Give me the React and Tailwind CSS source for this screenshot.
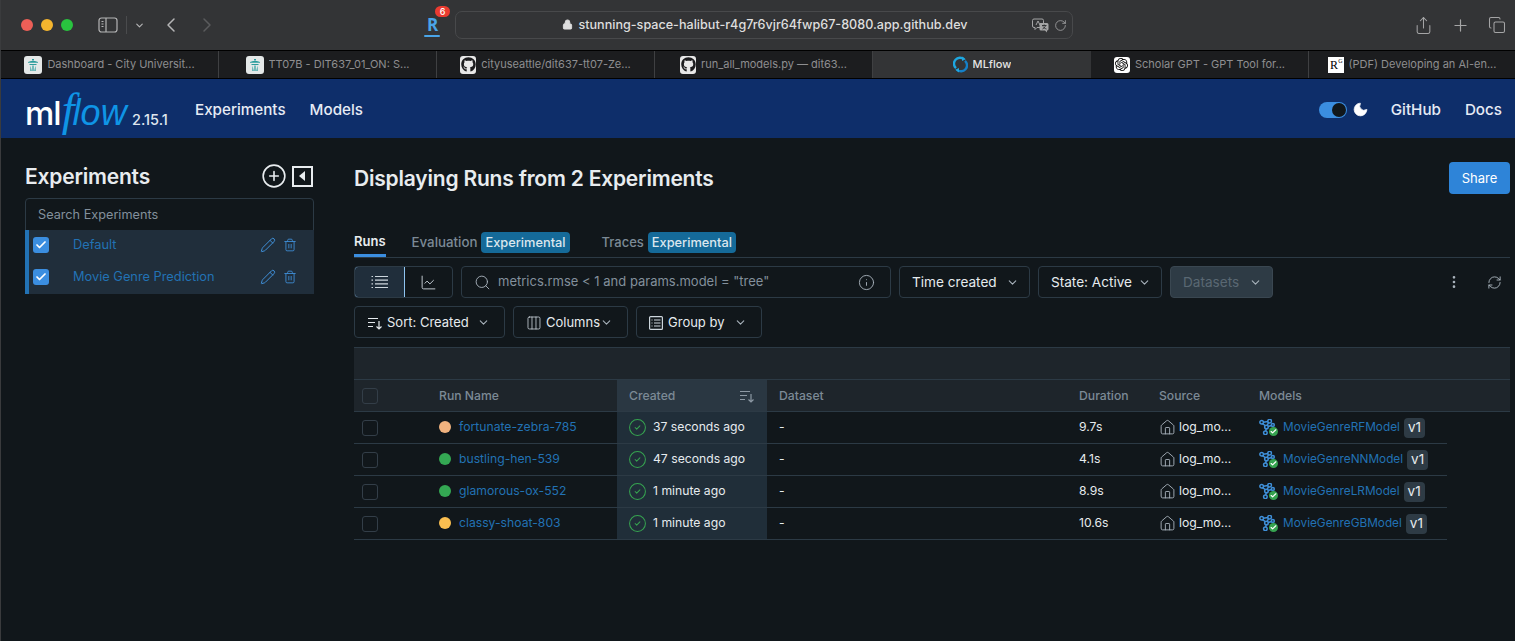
import React from "react";
import {
  ChevronDown, ChevronLeft, ChevronRight, Lock, Plus, RotateCw, Search, Info, Pencil, Trash2, Check,
  ChartLine, Columns3, EllipsisVertical, RefreshCw, House, CircleCheck, Moon, CirclePlus, Share, Copy,
} from "lucide-react";
import { FaGithub } from "react-icons/fa";
import { SiOpenai } from "react-icons/si";

const Chrome = "font-['Inter','Liberation_Sans',sans-serif]";

function SidebarIcon() {
  return (
    <svg width="20" height="16" viewBox="0 0 20 16" fill="none" stroke="#b5b5b6" strokeWidth="1.2">
      <rect x="1" y="1" width="18" height="14" rx="2.5" />
      <path d="M8 1v14" />
      <path d="M3.5 4.5h2M3.5 7h2M3.5 9.500h2" strokeWidth="1" />
    </svg>
  );
}

function TranslateIcon() {
  return (
    <svg width="17" height="15" viewBox="0 0 17 15" fill="none" stroke="#a5a5a6" strokeWidth="1">
      <path d="M2 1h8a1.500 1.500 0 0 1 1.500 1.500V8a1.500 1.500 0 0 1-1.500 1.500H5L3 11.500V9.500H2A1.500 1.500 0 0 1 .5 8V2.500A1.500 1.500 0 0 1 2 1z" />
      <path d="M8 5h7a1.500 1.500 0 0 1 1.500 1.500V11a1.500 1.500 0 0 1-1.500 1.500v2l-2-2H9A1.500 1.500 0 0 1 7.500 11V6z" fill="#a5a5a6" stroke="none" />
      <path d="M4 7l2-4 2 4" />
      <path d="M10 7.500h4.500M12.200 6.500v1M13.500 7.500c-.5 2-1.800 3-3 3.500M11 8.500c.6 1.200 2 2 3.500 2.500" stroke="#333436" />
    </svg>
  );
}

function SpaceNeedle() {
  return (
    <span className="flex h-[18px] w-[18px] shrink-0 items-center justify-center rounded-[3px] bg-[#e4e8e8]">
      <svg width="14" height="14" viewBox="0 0 14 14" fill="#2b9c9c">
        <path d="M6 1h2v1.500H6zM2 4c2-1.500 8-1.500 10 0v.8H2zM3.500 6h7v1h-7zM4.500 7.500l1.200 5.500H4.300zM9.500 7.500l-1.200 5.500h1.400zM6.400 7.500h1.200v5.500H6.400z" />
      </svg>
    </span>
  );
}

function GithubFav() {
  return (
    <span className="flex h-[18px] w-[16px] shrink-0 items-center justify-center rounded-[3px] bg-[#e8e8e8] text-[#1b1b1d]">
      <FaGithub size={15} />
    </span>
  );
}

function MlflowFav() {
  return (
    <svg width="15" height="17" viewBox="0 0 15 17" fill="none" strokeWidth="2.4">
      <path d="M11 3.200A6 6 0 0 0 3 12.200" stroke="#1ea7e0" />
      <path d="M4 13.800A6 6 0 0 0 12 4.800" stroke="#1580c8" />
      <path d="M9 0.500l3.800 2.700-3.800 1.800zM6 16.500L2.200 13.800 6 12z" fill="#1ea7e0" stroke="none" />
    </svg>
  );
}

function ListIcon() {
  return (
    <svg width="17" height="14" viewBox="0 0 17 14" fill="none" stroke="#cdd6dd" strokeWidth="1.200">
      <path d="M4 1.500h13M4 5.200h13M4 8.900h13M4 12.500h13M.5 1.500h1.500M.5 5.200h1.500M.5 8.900h1.500M.5 12.500h1.500" />
    </svg>
  );
}

function GroupIcon() {
  return (
    <svg width="14" height="14" viewBox="0 0 14 14" fill="none" stroke="#cdd6dd" strokeWidth="1.200">
      <rect x=".6" y=".6" width="12.800" height="12.800" rx="1" />
      <path d="M5 4h6.500M5 7h6.500M5 10h6.500M2.500 4h1M2.500 7h1M2.500 10h1" />
    </svg>
  );
}

function Tab({ icon, label, active, width = "w-[218px]" }) {
  return (
    <div className={`flex h-full ${width} shrink-0 items-center justify-center gap-[5px] border-r border-[#3f4042] px-[8px] text-[11px] ${active ? "bg-[#333436] font-medium text-[#e4e4e4] border-l border-[#333436]" : "bg-[#1c1d1f] text-[#8e8e90]"}`}>
      {icon}
      <span className="truncate whitespace-nowrap">{label}</span>
    </div>
  );
}

function Btn({ children, className = "" }) {
  return (
    <div className={`flex h-[32px] shrink-0 items-center rounded-[4px] border border-[#2c3a45] text-[13px] text-[#e6ebee] ${className}`}>
      {children}
    </div>
  );
}

function Chev({ className = "" }) {
  return <ChevronDown size={13} strokeWidth={2} className={`text-[#a9b3bc] ${className}`} />;
}

function SortIcon({ color = "#e6ebee" }) {
  return (
    <svg width="16" height="14" viewBox="0 0 16 14" fill="none" stroke={color} strokeWidth="1.200">
      <path d="M1 2.500h10M1 6.500h7M1 10.500h5M12 5v8M9.500 10.500l2.500 2.500 2.500-2.500" />
    </svg>
  );
}

function Checkbox({ on }) {
  return on ? (
    <span className="flex h-[16px] w-[16px] items-center justify-center rounded-[3px] bg-[#3b8ee0]">
      <Check size={12} strokeWidth={3.500} className="text-white" />
    </span>
  ) : (
    <span className="block h-[16px] w-[16px] rounded-[3px] border border-[#333e48]" />
  );
}

function ExpRow({ name }) {
  return (
    <div className="flex h-[32px] items-center pb-[3px] pl-[4px] pr-[17px]">
      <span className="ml-[4px]"><Checkbox on /></span>
      <span className="ml-[24px] flex-1 text-[12.800px] text-[#2272b4]">{name}</span>
      <Pencil size={16} strokeWidth={1.500} className="text-[#3f8fd8]" />
      <Trash2 size={14} strokeWidth={1.500} className="ml-[7px] text-[#3f8fd8]" />
    </div>
  );
}

function ModelIcon() {
  return (
    <span className="relative block h-[18px] w-[19px] shrink-0">
      <svg width="17" height="16" viewBox="0 0 16 15" fill="none" stroke="#3f8fd8" strokeWidth="1.400">
        <circle cx="2.500" cy="3" r="1.700" />
        <circle cx="10" cy="2" r="1.700" />
        <circle cx="7" cy="7.500" r="1.700" />
        <circle cx="6" cy="13" r="1.700" />
        <circle cx="13" cy="5.500" r="1.400" />
        <path d="M4 3l4.500-.7M3.500 4.300l2.500 2M8.800 3.500L7.800 6M8.500 7l3.500-.9M6.800 9.200l-.5 2.200" />
      </svg>
      <span className="absolute bottom-[1px] right-0 flex h-[9px] w-[9px] items-center justify-center rounded-full bg-[#36a350]">
        <Check size={7} strokeWidth={4} className="text-white" />
      </span>
    </span>
  );
}

const cols = {
  check: "w-[85px] pl-[8px]",
  name: "w-[178px]",
  created: "w-[150px] px-[12px]",
  dataset: "w-[300px] px-[12px]",
  duration: "w-[80px] px-[12px]",
  source: "w-[100px] px-[12px]",
};

function HeaderRow() {
  const c = "text-[12.200px] font-medium text-[#7c8a96]";
  return (
    <div className={`flex h-[33px] items-center border-b border-t border-[#2c3a45] bg-[#1e252b] ${c}`}>
      <div className={cols.check}><Checkbox /></div>
      <div className={`${cols.name} pt-[1px]`}>Run Name</div>
      <div className={`${cols.created} flex h-full items-center justify-between bg-[#2a3742]`}>
        <span className="pt-[1px]">Created</span>
        <SortIcon color="#8c98a3" />
      </div>
      <div className={`${cols.dataset} pt-[1px]`}>Dataset</div>
      <div className={`${cols.duration} pt-[1px]`}>Duration</div>
      <div className={`${cols.source} pt-[1px]`}>Source</div>
      <div className="pl-[12px] pt-[1px]">Models</div>
    </div>
  );
}

function Row({ color, name, time, dur, model }) {
  return (
    <div className="flex h-[32px] w-[1093px] items-center border-b border-[#2c3a45] text-[12.200px] text-[#e6ebee]">
      <div className={cols.check}><Checkbox /></div>
      <div className={`${cols.name} flex items-center gap-[8px] text-[#2272b4]`}>
        <span className="h-[12px] w-[12px] rounded-full" style={{ background: color }} />
        <span>{name}</span>
      </div>
      <div className={`${cols.created} flex h-full items-center gap-[6px] bg-[#202e39]`}>
        <CircleCheck size={19} strokeWidth={1.300} className="-ml-[1px] text-[#36a350]" />
        <span>{time}</span>
      </div>
      <div className={cols.dataset}>-</div>
      <div className={cols.duration}>{dur}</div>
      <div className={`${cols.source} flex items-center gap-[3px]`}>
        <House size={17} strokeWidth={1.300} className="shrink-0 text-[#a9b3bc]" />
        <span>log_mo...</span>
      </div>
      <div className="flex items-center pl-[12px]">
        <ModelIcon />
        <span className="ml-[5px] text-[11.800px] text-[#2272b4]">{model}</span>
        <span className="ml-[4px] flex h-[20px] items-center rounded-[4px] bg-[#2e3b45] px-[4px] text-[13.500px]">v1</span>
      </div>
    </div>
  );
}

export default function App() {
  const runs = [
    { color: "#f0b27f", name: "fortunate-zebra-785", time: "37 seconds ago", dur: "9.7s", model: "MovieGenreRFModel" },
    { color: "#34a853", name: "bustling-hen-539", time: "47 seconds ago", dur: "4.1s", model: "MovieGenreNNModel" },
    { color: "#34a853", name: "glamorous-ox-552", time: "1 minute ago", dur: "8.9s", model: "MovieGenreLRModel" },
    { color: "#fbbf50", name: "classy-shoat-803", time: "1 minute ago", dur: "10.6s", model: "MovieGenreGBModel" },
  ];
  return (
    <div className={`flex h-[641px] w-full flex-col overflow-hidden bg-[#11171b] ${Chrome} border-l border-[#3a3b3d]`}>
      {/* browser toolbar */}
      <div className="flex h-[50px] shrink-0 items-center bg-[#333436]">
        <div className="ml-[20px] flex gap-[8px]">
          <span className="h-[12px] w-[12px] rounded-full bg-[#ed5f57]" />
          <span className="h-[12px] w-[12px] rounded-full bg-[#f5b52e]" />
          <span className="h-[12px] w-[12px] rounded-full bg-[#29c33f]" />
        </div>
        <div className="ml-[25px]"><SidebarIcon /></div>
        <span className="ml-[8px] h-[18px] w-px bg-[#4a4b4d]" />
        <ChevronDown size={11} strokeWidth={2.500} className="ml-[7px] text-[#b5b5b6]" />
        <ChevronLeft size={24} strokeWidth={1.500} className="ml-[14px] text-[#b5b5b6]" />
        <ChevronRight size={24} strokeWidth={1.500} className="ml-[12px] text-[#5a5b5d]" />
        <div className="relative ml-[205px] w-[17px] text-center font-['Open_Sans','Liberation_Sans',sans-serif] text-[17px] font-bold leading-[20px] text-[#4aa5e8]">
          R
          <span className="absolute bottom-[-2px] left-0 h-[2px] w-[16px] rounded-full bg-[#4aa5e8]" />
          <span className="absolute left-[11px] top-[-9px] flex h-[11px] w-[15px] items-center justify-center rounded-full bg-[#ea3b30] font-['Inter',sans-serif] text-[9px] font-medium leading-none text-white">6</span>
        </div>
        <div className="ml-[14px] flex h-[28px] w-[618px] items-center rounded-[7px] border border-[#48494b] bg-[#333436]">
          <div className="flex flex-1 items-center justify-center gap-[5px] pl-[42px] text-[12.600px] font-medium text-[#dedede]">
            <Lock size={11} strokeWidth={2} fill="#dedede" className="text-[#dedede]" />
            <span>stunning-space-halibut-r4g7r6vjr64fwp67-8080.app.github.dev</span>
          </div>
          <TranslateIcon />
          <RotateCw size={13} strokeWidth={1.500} className="ml-[5px] mr-[5px] text-[#a5a5a6]" />
        </div>
        <div className="ml-auto flex items-center gap-[18px] pr-[9px] text-[#a5a5a6]">
          <Share size={19} strokeWidth={1.300} />
          <Plus size={19} strokeWidth={1.500} />
          <Copy size={18} strokeWidth={1.400} />
        </div>
      </div>

      {/* browser tabs */}
      <div className="flex h-[29px] shrink-0 items-stretch border-y border-black bg-[#1c1d1f]">
        <Tab icon={<SpaceNeedle />} label="Dashboard - City Universit..." />
        <Tab icon={<SpaceNeedle />} label="TT07B - DIT637_01_ON: S..." />
        <Tab icon={<GithubFav />} label="cityuseattle/dit637-tt07-Ze..." />
        <Tab icon={<GithubFav />} label="run_all_models.py — dit63..." />
        <Tab active icon={<MlflowFav />} label="MLflow" />
        <Tab icon={<span className="flex h-[16px] w-[16px] shrink-0 items-center justify-center rounded-[3px] bg-white text-black"><SiOpenai size={13} /></span>} label="Scholar GPT - GPT Tool for..." />
        <Tab
          width="flex-1 border-r-0"
          icon={<span className="relative flex h-[16px] w-[16px] shrink-0 items-center justify-center bg-white pr-[3px] font-['Liberation_Serif',serif] text-[12px] leading-none text-black">R<span className="absolute right-[1px] top-[1px] text-[6px]">G</span></span>}
          label="(PDF) Developing an AI-en..."
        />
      </div>

      {/* mlflow header */}
      <div className="flex h-[59px] shrink-0 items-center bg-[#0e2e6a] pl-[24px] pr-[13px] pt-[3px]">
        <div className="flex w-[146px] items-baseline">
          <span className="text-[33px] font-medium leading-none tracking-[-1px] text-white">ml</span>
          <span className="ml-[1px] font-['Liberation_Serif',serif] text-[46px] italic leading-none text-[#0f95e6]">f</span>
          <span className="-ml-[2px] font-['Liberation_Sans',sans-serif] text-[36px] font-medium italic leading-none tracking-[0.2px] text-[#0f95e6]">low</span>
          <span className="ml-[5px] whitespace-nowrap text-[14.500px] font-medium text-[#dfe6ee]">2.15.1</span>
        </div>
        <span className="ml-[24px] text-[15.200px] font-medium text-[#e6ebf5]">Experiments</span>
        <span className="ml-[24px] text-[15.200px] font-medium text-[#e6ebf5]">Models</span>
        <div className="ml-auto flex items-center">
          <span className="relative block h-[16px] w-[28px] rounded-full bg-[#3b8ee0]">
            <span className="absolute right-[1px] top-[1px] h-[14px] w-[14px] rounded-full bg-[#11171b]" />
          </span>
          <Moon size={17} fill="white" strokeWidth={1} className="ml-[5px] text-white" />
          <span className="ml-[22px] text-[15.200px] font-medium text-[#e6ebf5]">GitHub</span>
          <span className="ml-[24px] text-[15.200px] font-medium text-[#e6ebf5]">Docs</span>
        </div>
      </div>

      {/* page */}
      <div className="flex flex-1">
        <aside className="w-[353px] shrink-0 pl-[24px] pr-[40px] pt-[21px]">
          <div className="mb-[5px] flex h-[34px] items-center justify-between pr-[1px]">
            <h2 className="pt-[1px] text-[21px] font-semibold tracking-[-0.2px] text-[#e8ecef]">Experiments</h2>
            <div className="flex items-center gap-[5px] text-[#e8ecef]">
              <CirclePlus size={26} strokeWidth={1.500} />
              <span className="flex h-[21px] w-[21px] items-center justify-center border-2 border-[#e8ecef]">
                <span className="mr-[2px] h-0 w-0 border-y-[5px] border-r-[6px] border-y-transparent border-r-[#e8ecef]" />
              </span>
            </div>
          </div>
          <div className="flex h-[33px] items-center rounded-t-[4px] border border-[#2c3a45] pl-[12px] text-[12.700px] text-[#83909c]">Search Experiments</div>
          <div className="-mt-px border-l-[4px] border-[#2272b4] bg-[#202e3b]">
            <div className="-ml-[4px]">
              <ExpRow name="Default" />
              <ExpRow name="Movie Genre Prediction" />
            </div>
          </div>
        </aside>

        <main className="min-w-0 flex-1 pt-[24px]">
          <div className="flex h-[32px] items-start justify-between pr-[5px]">
            <h1 className="pt-[1px] text-[21px] font-semibold leading-[32px] tracking-[-0.2px] text-[#e8ecef]">Displaying Runs from 2 Experiments</h1>
            <div className="flex h-[32px] w-[61px] items-center justify-center rounded-[4px] bg-[#2e84d8] pt-[1px] text-[13px] text-white">Share</div>
          </div>

          <div className="mr-[5px] mt-[34px] flex h-[30px] items-center border-b border-[#2c3a45] text-[13px] font-medium text-[#7c8a96]">
            <span className="flex h-full items-center border-b-[3px] border-[#3b8ee0] pt-[1px] font-semibold text-[#e8ecef]">Runs</span>
            <span className="ml-[26px] text-[13.300px]">Evaluation</span>
            <span className="ml-[4px] rounded-[4px] bg-[#156a99] px-[4px] py-[1px] text-[12.800px] text-[#dbe7ee]">Experimental</span>
            <span className="ml-[32px] text-[13px]">Traces</span>
            <span className="ml-[4px] rounded-[4px] bg-[#156a99] px-[4px] py-[1px] text-[12.800px] text-[#dbe7ee]">Experimental</span>
          </div>

          <div className="mt-[8px] flex items-center pr-[8px]">
            <div className="flex h-[32px] w-[99px] shrink-0 overflow-hidden rounded-[4px] border border-[#2c3a45]">
              <span className="-m-px flex w-[51px] items-center justify-center rounded-l-[4px] border border-[#8fc4f0] bg-[#202e3b]"><ListIcon /></span>
              <span className="flex flex-1 items-center justify-center text-[#cdd6dd]"><ChartLine size={17} strokeWidth={1.300} /></span>
            </div>
            <div className="ml-[8px] flex h-[32px] w-[430px] shrink-0 items-center rounded-[4px] border border-[#2c3a45] pl-[12px] pr-[15px] text-[13px] text-[#83909c]">
              <Search size={17} strokeWidth={1.300} className="text-[#a9b3bc]" />
              <span className="ml-[7px] flex-1 truncate">metrics.rmse &lt; 1 and params.model = "tree"</span>
              <Info size={17} strokeWidth={1.300} className="text-[#a9b3bc]" />
            </div>
            <Btn className="ml-[8px] w-[131px] pl-[12px] !text-[13.600px]"><span className="flex-1">Time created</span><Chev className="mr-[10px]" /></Btn>
            <Btn className="ml-[8px] w-[124px] pl-[12px] !text-[13.600px]"><span className="flex-1">State: Active</span><Chev className="mr-[10px]" /></Btn>
            <Btn className="ml-[8px] w-[103px] border-[#3a4751] bg-[#2e3b45] pl-[12px] !text-[13.600px]"><span className="flex-1 text-[#5a6873]">Datasets</span><Chev className="mr-[10px]" /></Btn>
            <EllipsisVertical size={16} strokeWidth={2} className="ml-[173px] text-[#a9b3bc]" />
            <RefreshCw size={15} strokeWidth={1.500} className="ml-[25px] text-[#a9b3bc]" />
          </div>

          <div className="mt-[8px] flex gap-[8px]">
            <Btn className="w-[151px] pl-[12px] pt-[1px]"><SortIcon /><span className="ml-[4px] flex-1">Sort: Created</span><Chev className="mr-[14px]" /></Btn>
            <Btn className="w-[115px] pl-[12px] pt-[1px]"><Columns3 size={16} strokeWidth={1.200} className="text-[#cdd6dd]" /><span className="ml-[4px] flex-1">Columns</span><Chev className="mr-[14px]" /></Btn>
            <Btn className="w-[126px] pl-[12px] pt-[1px]"><GroupIcon /><span className="ml-[5px] flex-1">Group by</span><Chev className="mr-[14px]" /></Btn>
          </div>

          <div className="mr-[5px] mt-[9px]">
            <div className="h-[33px] border-t border-[#2c3a45] bg-[#1e252b]" />
            <div className="-mt-px"><HeaderRow /></div>
            {runs.map((r) => <Row key={r.name} {...r} />)}
          </div>
        </main>
      </div>
    </div>
  );
}
